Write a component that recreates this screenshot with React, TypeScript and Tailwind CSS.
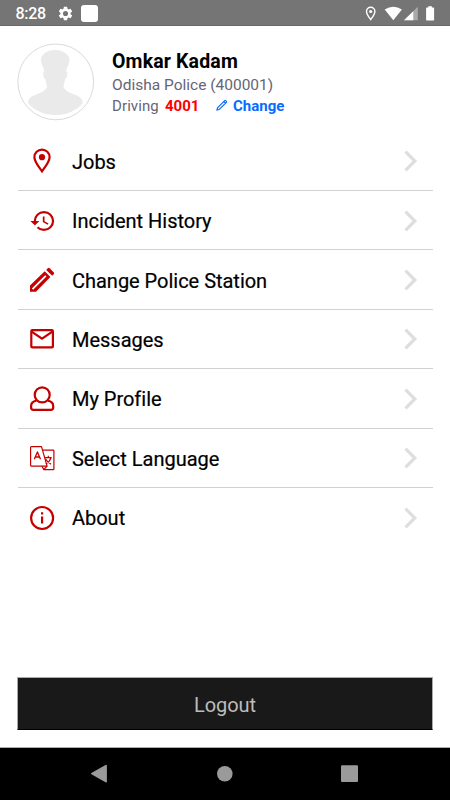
import type { ReactNode } from 'react';

function Icon({ children }: { children: ReactNode }) {
  return (
    <svg viewBox="0 0 26 26" className="h-[26px] w-[26px] shrink-0" fill="none" stroke="#c40000" strokeWidth="2.2">
      {children}
    </svg>
  );
}

const items: { label: string; icon: ReactNode }[] = [
  {
    label: 'Jobs',
    icon: (
      <>
        <path d="M13 23.300C9.500 18.500 5.400 13.500 5.400 9.200a7.600 7.600 0 0 1 15.200 0c0 4.300-4.100 9.300-7.600 14.100z" />
        <circle cx="13" cy="9.200" r="3.100" fill="#c40000" stroke="none" />
      </>
    ),
  },
  {
    label: 'Incident History',
    icon: (
      <g transform="translate(.2 -.3) scale(1.135 1.105)" fill="#c40000" stroke="none">
        <path d="M13 3a9 9 0 0 0-9 9H1l3.890 3.890.07.14L9 12H6c0-3.870 3.130-7 7-7s7 3.130 7 7-3.130 7-7 7c-1.930 0-3.680-.79-4.940-2.060l-1.420 1.420A8.954 8.954 0 0 0 13 21a9 9 0 0 0 0-18z" />
        <path d="M12 8v5l4.280 2.540.72-1.210-3.500-2.080V8z" />
      </g>
    ),
  },
  {
    label: 'Change Police Station',
    icon: (
      <>
        <path fill="#c40000" stroke="none" d="M1 24.700V18.600L15.700 4.300l5.700 5.700L7 24.700z" />
        <path fill="#c40000" stroke="none" d="M17.200 2.900l1.800-1.700q.8-.7 1.600 0l4.300 4.200q.7.800 0 1.600l-1.700 1.800z" />
        <path stroke="white" strokeWidth="1.800" d="M3.500 22.200L16.800 8.900" />
      </>
    ),
  },
  {
    label: 'Messages',
    icon: (
      <>
        <rect x="2.300" y="4.200" width="21.600" height="17.200" rx="1" />
        <path d="M2.600 5.600L13 12.600l10.400-7" />
      </>
    ),
  },
  {
    label: 'My Profile',
    icon: (
      <>
        <circle cx="13.200" cy="8.900" r="7.500" />
        <path d="M7.400 14.600C4 15.300 2.100 17.300 2.100 20v1.500q0 2.300 2.300 2.300h17.500q2.300 0 2.300-2.300V20c0-2.700-1.900-4.700-5.300-5.400" />
      </>
    ),
  },
  {
    label: 'Select Language',
    icon: (
      <g strokeWidth="1.200" strokeLinejoin="round">
        <path d="M12.500 1.600H2.500q-.9 0-.9.900v17.700q0 .9.900.9h15.600L12.500 1.600z" />
        <path d="M13.600 5.200h10.500q.8 0 .8.800v17.900q0 .8-.8.800h-9.300l-1.800-3.500M14.800 24.500l3.300-3.400" />
        <path strokeWidth="1.300" d="M5.300 14.300L8.400 6.900l3.100 7.400M6.300 12h4.200" />
        <path d="M15.700 12.600h7M19.300 10.700v1.900M22 12.700c-.8 3-2.700 4.900-5.200 6.300M16.700 13.900c1.100 2.300 2.900 4 5.300 5.200" />
      </g>
    ),
  },
  {
    label: 'About',
    icon: (
      <>
        <circle cx="13.100" cy="13" r="11" />
        <path d="M13.100 11.600v7M13.100 7.200v2.300" />
      </>
    ),
  },
];

function StatusBar() {
  return (
    <div className="flex h-[26px] shrink-0 items-center border-b border-[#686868] bg-[#757575] pl-[15.500px] text-white">
      <span className="w-[31.500px] pt-[2px] text-[16px] leading-none font-medium tracking-[-0.3px]">8:28</span>
      <svg viewBox="0 0 24 24" className="ml-[10px] mt-px h-[17px] w-[17px]" fill="white">
        <path d="M19.140 12.940c.04-.3.060-.61.060-.94s-.020-.64-.070-.94l2.030-1.580a.49.49 0 0 0 .12-.61l-1.920-3.320a.488.488 0 0 0-.59-.22l-2.390.96c-.5-.38-1.030-.7-1.620-.94l-.36-2.540a.484.484 0 0 0-.48-.41h-3.840c-.24 0-.43.17-.47.41l-.36 2.540c-.59.24-1.130.57-1.620.94l-2.390-.96c-.22-.08-.47 0-.59.22L2.740 8.870c-.12.21-.08.47.12.61l2.030 1.580c-.05.3-.09.63-.09.94s.020.64.070.94l-2.030 1.580a.49.49 0 0 0-.12.61l1.920 3.320c.12.22.37.29.59.22l2.390-.96c.5.38 1.030.7 1.620.94l.36 2.540c.05.24.24.41.48.41h3.840c.24 0 .44-.17.47-.41l.36-2.540c.59-.24 1.130-.56 1.620-.94l2.390.96c.22.08.47 0 .59-.22l1.920-3.320c.12-.22.07-.47-.12-.61zM12 15.600A3.600 3.600 0 1 1 12 8.400a3.600 3.600 0 0 1 0 7.200z" />
      </svg>
      <div className="mt-[2px] ml-[7px] h-[17px] w-[17px] rounded-[3px] bg-white" />
      <svg viewBox="0 0 80 24" className="mr-[11px] ml-auto h-[24px] w-[80px]" fill="white">
        <path d="M11.700 18.500C9.500 15.500 7.500 13.100 7.500 10.400a4.200 4.200 0 0 1 8.400 0c0 2.700-2 5.100-4.200 8.100z" fill="none" stroke="white" strokeWidth="1.400" />
        <circle cx="11.700" cy="10.500" r="1.600" />
        <path d="M25.700 8.500Q34.300 2.800 42.900 8.500L34.300 19.300z" />
        <path d="M58.800 5.700V19.300H45z" fill="#aaa" />
        <path d="M54.300 10.200V19.300H45z" />
        <path d="M67.800 6.500h1.500V5.300h3.600v1.200h1.500q.7 0 .7.700v11.500q0 .7-.7.700h-6.600q-.7 0-.7-.7V7.200q0-.7.7-.7z" />
      </svg>
    </div>
  );
}

function Profile() {
  return (
    <header className="flex h-[105.600px] shrink-0 pt-[17px] pl-[17px]">
      <svg viewBox="0 0 78 78" className="h-[78px] w-[78px] shrink-0">
        <circle cx="38.700" cy="38.900" r="37.900" fill="white" stroke="#dadada" />
        <path
          fill="#eaeaea"
          d="M38 7C46 7 52.500 11.500 52.500 17c0 3-1.500 5-2.500 8l-1 3.500c1.500 0 1.500 2 1 4-.4 2-1 3.500-2 3.500-.3 3.500-1.500 5.500-1.500 8 2 4.500 7 6 12 8 4 1.500 7 3.500 7.200 8C60 67.500 50 72 38.700 72S17 67.500 11 60c0-4.500 3-6.500 7-8 5-2 10-3.500 12-8 0-2.500-1.300-4.500-1.600-8-1.200 0-1.700-1.500-2-3.500-.4-2-.4-4 1-4l-1-3.500c-1-3-2.400-5-2.400-8C24 11.500 30 7 38 7z"
        />
      </svg>
      <div className="ml-[17px] flex flex-col pt-[7px]">
        <h1 className="h-[24px] text-[19.500px] leading-[24px] font-bold tracking-[0.15px] text-black">Omkar Kadam</h1>
        <p className="mt-px h-[20px] text-[15.500px] leading-[20px] text-[#666575]">Odisha Police (400001)</p>
        <div className="mt-px flex h-[20px] items-center text-[15px] leading-[20px]">
          <span className="w-[53px] tracking-[0.1px] text-[#666575]">Driving</span>
          <span className="w-[50px] font-bold text-[#ff0000]">4001</span>
          <svg viewBox="0 0 14 14" className="mb-[2px] h-[14px] w-[14px]" fill="none" stroke="#086cff" strokeWidth="1.150">
            <path d="M2 12l.5-2.200 7.200-7.200q.5-.5 1 0l.7.700q.5.500 0 1L4.200 11.500zM9 3.600l1.500 1.500" />
          </svg>
          <span className="ml-[4px] font-bold text-[#086cff]">Change</span>
        </div>
      </div>
    </header>
  );
}

export default function App() {
  return (
    <div className="flex h-[800px] w-[450px] flex-col overflow-hidden bg-white font-['Roboto',sans-serif]">
      <StatusBar />
      <Profile />
      <nav className="mr-[17px] ml-[17.500px] flex flex-col">
        {items.map(({ label, icon }) => (
          <div key={label} className="flex h-[59.400px] items-center border-b border-[#d2d2d2] pt-px pl-[11.500px] last:border-b-0 last:pt-0">
            <Icon>{icon}</Icon>
            <span className="mt-px ml-[17px] text-[20px] leading-[24px] font-normal tracking-[-0.02px] text-black [-webkit-text-stroke:0.2px_black]">{label}</span>
            <svg viewBox="0 0 16 22" className="mr-[14px] ml-auto h-[22px] w-[16px]" fill="none" stroke="#dedede" strokeWidth="3.200">
              <path d="M2.500 1.700L11.800 11l-9.300 9.300" />
            </svg>
          </div>
        ))}
      </nav>
      <button className="mx-[17px] mt-auto mb-[17px] flex h-[53px] shrink-0 items-center justify-center border border-t-[#aaa] border-r-[#aaa] border-b-black border-l-[#aaa] bg-[#191919] pt-[2px] text-[20px] tracking-[-0.1px] text-[#bdbdbd]">
        Logout
      </button>
      <div className="flex h-[53px] shrink-0 border-t border-[#aaa] bg-black">
        <svg viewBox="0 0 450 52" className="h-[52px] w-[450px]" fill="#9a9a9a">
          <path d="M91.400 25.100L105.500 17q1.400-.7 1.400.8v15.700q0 1.500-1.400.8L91.400 26.300q-.8-.6 0-1.200z" />
          <circle cx="224.800" cy="25.700" r="7.800" />
          <rect x="341" y="17.300" width="17" height="16.700" rx="1" />
        </svg>
      </div>
    </div>
  );
}
